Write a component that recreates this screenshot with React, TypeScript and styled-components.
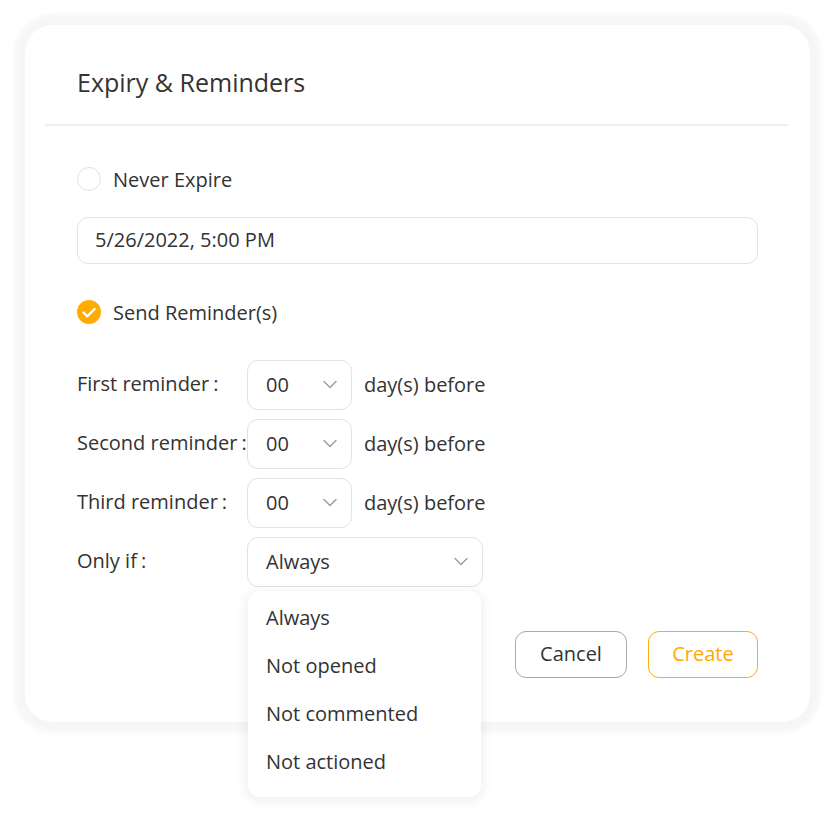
import styled, { createGlobalStyle } from 'styled-components';

const GlobalStyle = createGlobalStyle`
  body {
    margin: 0;
    background: #ffffff;
    font-family: "Open Sans", "Liberation Sans", sans-serif;
    color: #333333;
  }
`;

const Page = styled.div`
  padding: 25px;
  width: 835px;
  min-height: 829px;
  box-sizing: border-box;
`;

const Card = styled.div`
  width: 785px;
  height: 697px;
  box-sizing: border-box;
  background: #fff;
  border-radius: 28px;
  box-shadow: 0 0 4px 11px rgba(0, 0, 0, 0.035);
  padding-bottom: 44px;
  display: flex;
  flex-direction: column;
`;

const Header = styled.div`
  margin: 0 22px 0 20px;
  padding: 40px 0 24px 32px;
  border-bottom: 2px solid #eeeeee;
`;

const Title = styled.h2`
  margin: 0;
  font-size: 25px;
  line-height: 35px;
  font-weight: 400;
  color: #333;
`;

const Body = styled.div`
  padding: 38px 52px 0 52px;
  display: flex;
  flex-direction: column;
`;

const OptionRow = styled.label`
  display: flex;
  align-items: center;
  gap: 12px;
  height: 30px;
  font-size: 20px;
  color: #333;
`;

const Radio = styled.span<{ $checked?: boolean }>`
  width: 24px;
  height: 24px;
  box-sizing: border-box;
  border-radius: 50%;
  border: ${(p) => (p.$checked ? 'none' : '1.5px solid #e0e0e0')};
  background: ${(p) => (p.$checked ? '#ffab00' : '#fff')};
  display: flex;
  align-items: center;
  justify-content: center;
`;

const DateInput = styled.div`
  margin: 23px 0 33px;
  height: 47px;
  box-sizing: border-box;
  border: 1.5px solid #e2e2e2;
  border-radius: 11px;
  display: flex;
  align-items: center;
  padding: 0 0 2px 17px;
  font-size: 20px;
  color: #333;
`;

const Reminders = styled.div`
  margin-top: 33px;
  display: flex;
  flex-direction: column;
  gap: 9px;
`;

const ReminderRow = styled.div`
  display: flex;
  align-items: center;
  height: 50px;
  font-size: 20px;
  color: #333;
`;

const Label = styled.span`
  width: 170px;
  white-space: nowrap;
  padding-bottom: 4px;
`;

const Colon = styled.span`
  margin-left: 4px;
`;

const SelectWrap = styled.div`
  position: relative;
`;

const Select = styled.div<{ $width: number }>`
  width: ${(p) => p.$width}px;
  height: 50px;
  box-sizing: border-box;
  border: 1.5px solid #e2e2e2;
  border-radius: 11px;
  display: flex;
  align-items: center;
  justify-content: space-between;
  padding: 0 14px 2px 18px;
  background: #fff;
`;

const Suffix = styled.span`
  margin-left: 12px;
  padding-bottom: 2px;
`;

const Menu = styled.div`
  position: absolute;
  top: 54px;
  left: 1px;
  width: 233px;
  box-sizing: border-box;
  background: #fff;
  border-radius: 12px;
  box-shadow: 0 2px 10px 4px rgba(0, 0, 0, 0.05);
  padding: 3px 0 11px;
  z-index: 2;
`;

const MenuItem = styled.div`
  height: 48px;
  box-sizing: border-box;
  display: flex;
  align-items: center;
  padding: 0 0 2px 18px;
  font-size: 20px;
  color: #333;
`;

const Actions = styled.div`
  margin-top: auto;
  padding-right: 52px;
  display: flex;
  justify-content: flex-end;
  gap: 21px;
`;

const Button = styled.button<{ $primary?: boolean }>`
  height: 47px;
  padding: 0 0 2px;
  width: ${(p) => (p.$primary ? 110 : 112)}px;
  border-radius: 11px;
  background: #fff;
  border: 1.5px solid ${(p) => (p.$primary ? '#ffad0d' : '#aaaaaa')};
  color: ${(p) => (p.$primary ? '#ffa800' : '#333')};
  font-family: inherit;
  font-size: 20px;
`;

const Chevron = () => (
  <svg width="14" height="9" viewBox="0 0 14 9" fill="none">
    <path d="M1 1.5l6 6 6-6" stroke="#9a9a9a" strokeWidth="1.4" strokeLinecap="round" strokeLinejoin="round" />
  </svg>
);

const Check = () => (
  <svg width="14" height="11" viewBox="0 0 14 11" fill="none">
    <path d="M1.5 5.5l3.8 3.8L12.5 2" stroke="#fff" strokeWidth="2.4" strokeLinecap="round" strokeLinejoin="round" />
  </svg>
);

const reminders = ['First reminder', 'Second reminder', 'Third reminder'];
const conditions = ['Always', 'Not opened', 'Not commented', 'Not actioned'];

export default function App() {
  return (
    <Page>
      <GlobalStyle />
      <Card>
        <Header>
          <Title>Expiry &amp; Reminders</Title>
        </Header>
        <Body>
          <OptionRow>
            <Radio />
            Never Expire
          </OptionRow>
          <DateInput>5/26/2022, 5:00 PM</DateInput>
          <OptionRow>
            <Radio $checked>
              <Check />
            </Radio>
            Send Reminder(s)
          </OptionRow>
          <Reminders>
            {reminders.map((r) => (
              <ReminderRow key={r}>
                <Label>
                  {r}
                  <Colon>:</Colon>
                </Label>
                <Select $width={105}>
                  <span>00</span>
                  <Chevron />
                </Select>
                <Suffix>day(s) before</Suffix>
              </ReminderRow>
            ))}
            <ReminderRow>
              <Label>
                Only if<Colon>:</Colon>
              </Label>
              <SelectWrap>
                <Select $width={236}>
                  <span>Always</span>
                  <Chevron />
                </Select>
                <Menu>
                  {conditions.map((c) => (
                    <MenuItem key={c}>{c}</MenuItem>
                  ))}
                </Menu>
              </SelectWrap>
            </ReminderRow>
          </Reminders>
        </Body>
        <Actions>
          <Button>Cancel</Button>
          <Button $primary>Create</Button>
        </Actions>
      </Card>
    </Page>
  );
}
